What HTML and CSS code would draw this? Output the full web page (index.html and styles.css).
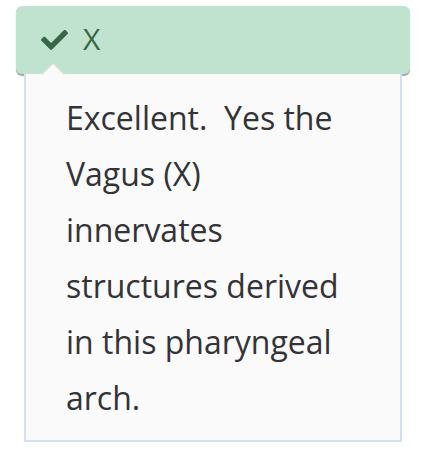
FILE: index.html
```html
<!DOCTYPE html>
<html>
<head>
<meta charset="utf-8">
<link rel="stylesheet" href="styles.css">
</head>
<body>
<div class="wrap">
  <div class="header">
    <svg class="check" viewBox="0 70 512 374" width="27" height="20" aria-hidden="true"><path fill="#386647" d="M173.898 439.404l-166.4-166.4c-9.997-9.997-9.997-26.206 0-36.204l36.203-36.204c9.997-9.998 26.207-9.998 36.204 0L192 312.69 432.095 72.596c9.997-9.997 26.207-9.997 36.204 0l36.203 36.204c9.997 9.997 9.997 26.206 0 36.204l-294.4 294.401c-9.998 9.997-26.207 9.997-36.204-.001z"/></svg>
    <span class="label">X</span>
  </div>
  <div class="panel">
    <span class="caret"></span>
    <p class="text">Excellent.&nbsp; Yes the Vagus (X) innervates structures derived in this pharyngeal arch.</p>
  </div>
</div>
</body>
</html>
```
FILE: styles.css
```css
html, body {
  margin: 0;
  padding: 0;
  background: #ffffff;
}
.wrap {
  padding: 6px 0 0 16px;
  width: 394px;
  font-family: "Open Sans", "DejaVu Sans", sans-serif;
}
.header {
  height: 68px;
  background: #c0e3cf;
  border-radius: 6px;
  box-shadow: 0 2px 1px rgba(80, 100, 90, 0.55);
  display: flex;
  align-items: center;
  padding-left: 25px;
  gap: 15px;
  box-sizing: border-box;
}
.check {
  display: block;
  margin-top: -1px;
}
.label {
  font-size: 30px;
  color: #386647;
  line-height: 1;
  margin-top: -2px;
}
.panel {
  position: relative;
  margin: 0 8px 0 8px;
  background: #fafafa;
  border: 2px solid #d3e0f1;
  border-top: none;
  padding: 16px 40px 14px 40px;
}
.caret {
  position: absolute;
  left: 19px;
  top: -8px;
  width: 15px;
  height: 15px;
  background: #fafafa;
  border-top: 1px solid #dcdcdc;
  border-left: 1px solid #dcdcdc;
  transform: rotate(45deg);
}
.text {
  margin: 0;
  font-size: 32px;
  line-height: 56px;
  color: #333338;
}
```
